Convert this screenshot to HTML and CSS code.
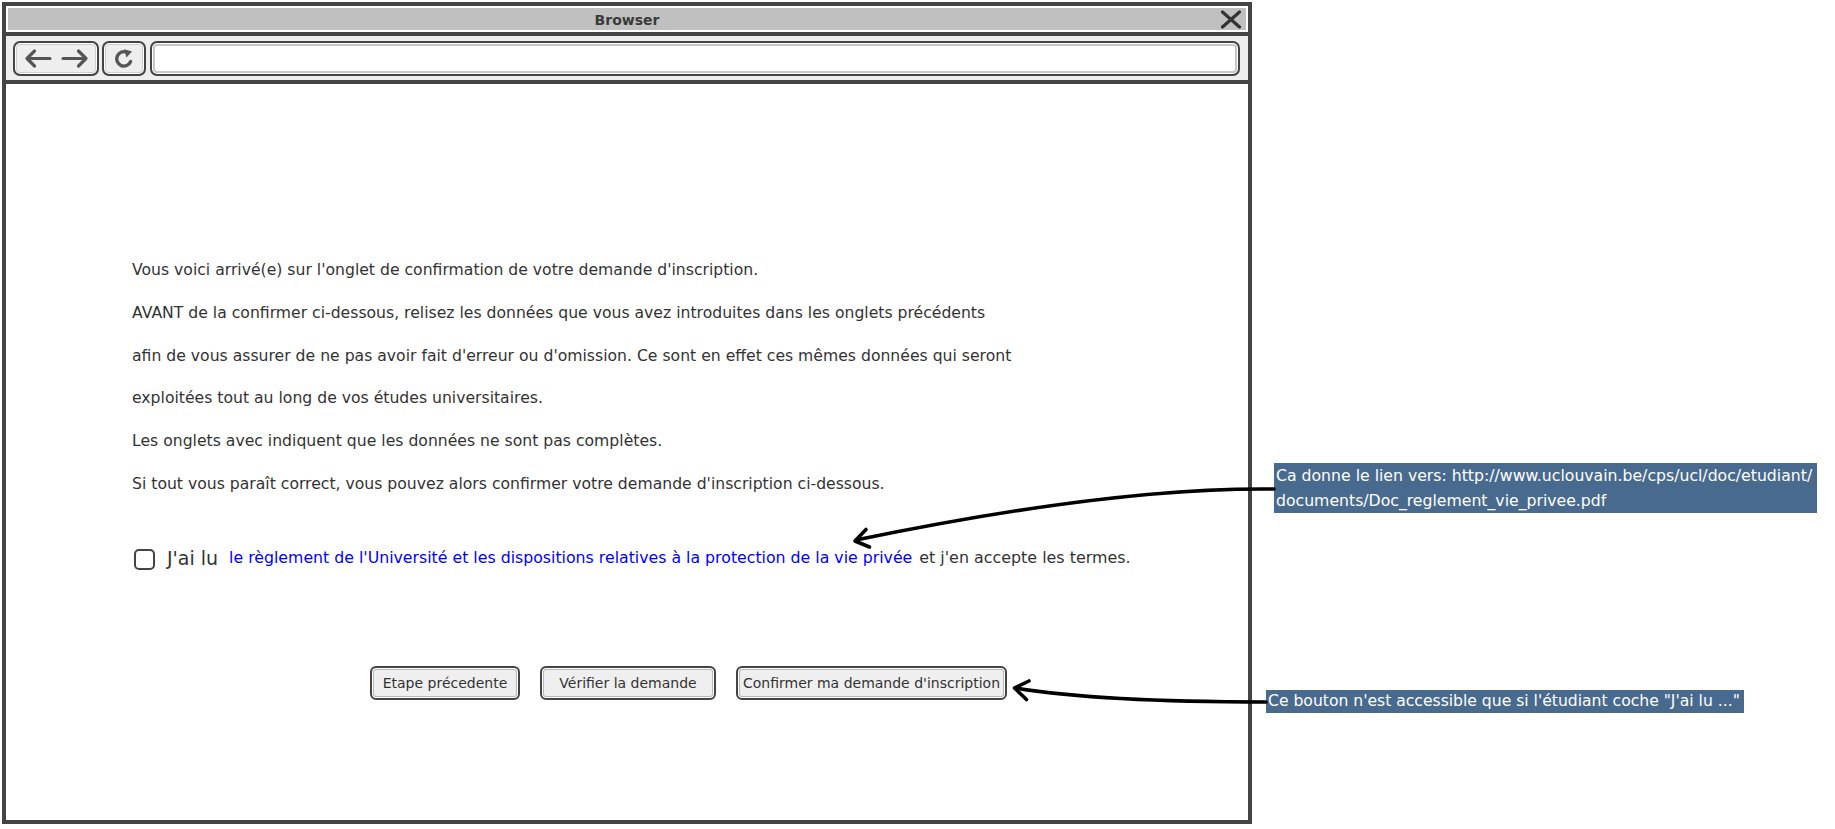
FILE: index.html
```html
<!DOCTYPE html>
<html lang="fr">
<head>
<meta charset="utf-8">
<title>Confirmation</title>
<link rel="stylesheet" href="styles.css">
</head>
<body>
<div class="canvas">
  <div class="window">
    <div class="titlebar">
      <div class="titlebar-inner">
        <span class="title">Browser</span>
        <svg class="close" width="22" height="19" viewBox="0 0 22 19"><path d="M2.5 2 L19.5 17 M19.5 2 L2.5 17" stroke="#333" stroke-width="3.2" stroke-linecap="round" fill="none"/></svg>
      </div>
    </div>
    <div class="toolbar">
      <div class="tbtn nav">
        <svg width="82" height="31" viewBox="0 0 82 31"><g stroke="#555" stroke-width="3.2" stroke-linecap="round" stroke-linejoin="round" fill="none"><path d="M12 15.5 H35 M12 15.5 L19.5 8 M12 15.5 L19.5 23"/><path d="M48 15.5 H71 M71 15.5 L63.5 8 M71 15.5 L63.5 23"/></g></svg>
      </div>
      <div class="tbtn refresh">
        <svg width="22" height="22" viewBox="0 0 22 22"><path d="M17.6 13.6 A7.2 7.2 0 1 1 13.6 4.2" stroke="#555" stroke-width="3.4" stroke-linecap="round" fill="none"/><path d="M11.2 1.2 L19 3.4 L13.4 9.4 Z" fill="#555"/></svg>
      </div>
      <div class="address"></div>
    </div>
    <div class="content">
      <div class="text">
        <p>Vous voici arrivé(e) sur l'onglet de confirmation de votre demande d'inscription.</p>
        <p>AVANT de la confirmer ci-dessous, relisez les données que vous avez introduites dans les onglets précédents</p>
        <p>afin de vous assurer de ne pas avoir fait d'erreur ou d'omission. Ce sont en effet ces mêmes données qui seront</p>
        <p>exploitées tout au long de vos études universitaires.</p>
        <p>Les onglets avec indiquent que les données ne sont pas complètes.</p>
        <p>Si tout vous paraît correct, vous pouvez alors confirmer votre demande d'inscription ci-dessous.</p>
      </div>
      <div class="agree">
        <input type="checkbox" class="check">
        <span class="lu">J'ai lu</span>
        <a class="link" href="#">le règlement de l'Université et les dispositions relatives à la protection de la vie privée</a>
        <span class="rest">et j'en accepte les termes.</span>
      </div>
      <div class="actions">
        <button class="btn btn-prev">Etape précedente</button>
        <button class="btn btn-check">Vérifier la demande</button>
        <button class="btn btn-confirm">Confirmer ma demande d'inscription</button>
      </div>
    </div>
  </div>

  <div class="note note1">Ca donne le lien vers: http://www.uclouvain.be/cps/ucl/doc/etudiant/<br>documents/Doc_reglement_vie_privee.pdf</div>
  <div class="note note2">Ce bouton n'est accessible que si l'étudiant coche "J'ai lu ..."</div>

  <svg class="arrows" width="1835" height="829" viewBox="0 0 1835 829">
    <g stroke="#000" stroke-width="3.6" stroke-linecap="round" stroke-linejoin="round" fill="none">
      <path d="M1274 489 Q1112 487 856 540"/>
      <path d="M869.5 547 L855 541 L866 529.5"/>
      <path d="M1266 702 Q1100 702 1015 688"/>
      <path d="M1026.5 699.5 L1014.5 688 L1029 681"/>
    </g>
  </svg>
</div>
</body>
</html>
```

FILE: styles.css
```css
* {
  box-sizing: border-box;
}

html,
body {
  margin: 0;
  padding: 0;
}

body {
  width: 1835px;
  height: 829px;
  overflow: hidden;
  background: #ffffff;
  font-family: "DejaVu Sans", "Liberation Sans", sans-serif;
  color: #333333;
}

.canvas {
  position: relative;
  width: 1835px;
  height: 829px;
  padding: 2px;
}

.window {
  width: 1250px;
  height: 822px;
  border: 4px solid #444444;
  display: flex;
  flex-direction: column;
  background: #ffffff;
}

.titlebar {
  height: 30px;
  padding: 2px;
  border-bottom: 4px solid #444444;
}

.titlebar-inner {
  height: 22px;
  background: #c0c0c0;
  display: grid;
  grid-template-columns: 1fr auto 1fr;
  align-items: center;
}

.title {
  grid-column: 2;
  font-weight: bold;
  font-size: 14px;
  color: #3a3a3a;
  padding-top: 2px;
}

.close {
  grid-column: 3;
  justify-self: end;
  margin-right: 4px;
  display: block;
}

.toolbar {
  height: 48px;
  border-bottom: 4px solid #444444;
  background: #eeeeee;
  display: flex;
  align-items: flex-start;
  padding: 5px 8px 0 7px;
}

.tbtn {
  height: 35px;
  border: 2px solid #444444;
  border-radius: 7px;
  background: #eeeeee;
  box-shadow: inset 0 0 0 1px #ffffff, inset 0 0 0 2px #cfcfcf;
  display: flex;
  align-items: center;
  justify-content: center;
}

.nav {
  width: 86px;
}

.refresh {
  width: 44px;
  margin-left: 3px;
}

.address {
  flex: 1;
  height: 35px;
  margin-left: 4px;
  border: 2px solid #444444;
  border-radius: 7px;
  background: #ffffff;
  box-shadow: inset 0 0 0 1px #ffffff, inset 0 0 0 3px #c8c8c8;
}

.content {
  flex: 1;
  padding: 165px 0 0 126px;
  font-size: 15.65px;
}

.text p {
  margin: 0;
  line-height: 42.8px;
  white-space: nowrap;
}

.agree {
  display: flex;
  align-items: center;
  height: 24px;
  margin-top: 40px;
  white-space: nowrap;
}

.check {
  appearance: none;
  -webkit-appearance: none;
  margin: 3px 0 0 2px;
  width: 21px;
  height: 21px;
  border: 2.5px solid #444444;
  border-radius: 5px;
  background: #ffffff;
}

.lu {
  margin-left: 12px;
  font-size: 19px;
  color: #333333;
}

.link {
  margin-left: 11px;
  color: #0000ff;
  text-decoration: none;
  font-size: 15.75px;
}

.rest {
  margin-left: 7px;
  font-size: 15.9px;
}

.actions {
  display: flex;
  gap: 20px;
  margin-top: 96px;
  padding-left: 238px;
}

.btn {
  height: 34px;
  border: 2px solid #444444;
  border-radius: 6px;
  background: #efefef;
  box-shadow: inset 0 0 0 1px #ffffff, inset 0 0 0 2px #b8b8b8;
  font-family: "DejaVu Sans", "Liberation Sans", sans-serif;
  font-size: 14px;
  color: #333333;
  padding: 0;
  display: flex;
  align-items: center;
  justify-content: center;
  white-space: nowrap;
}

.btn-prev {
  width: 150px;
}

.btn-check {
  width: 176px;
}

.btn-confirm {
  width: 271px;
}

.note {
  position: absolute;
  background: #496a8f;
  color: #ffffff;
  font-size: 15.7px;
  white-space: nowrap;
  padding: 0 2px;
}

.note1 {
  left: 1274px;
  top: 463px;
  width: 543px;
  height: 50px;
  line-height: 25px;
}

.note2 {
  left: 1266px;
  top: 690px;
  width: 478px;
  height: 23px;
  line-height: 23px;
  font-size: 15.6px;
}

.arrows {
  position: absolute;
  left: 0;
  top: 0;
  pointer-events: none;
}
```
